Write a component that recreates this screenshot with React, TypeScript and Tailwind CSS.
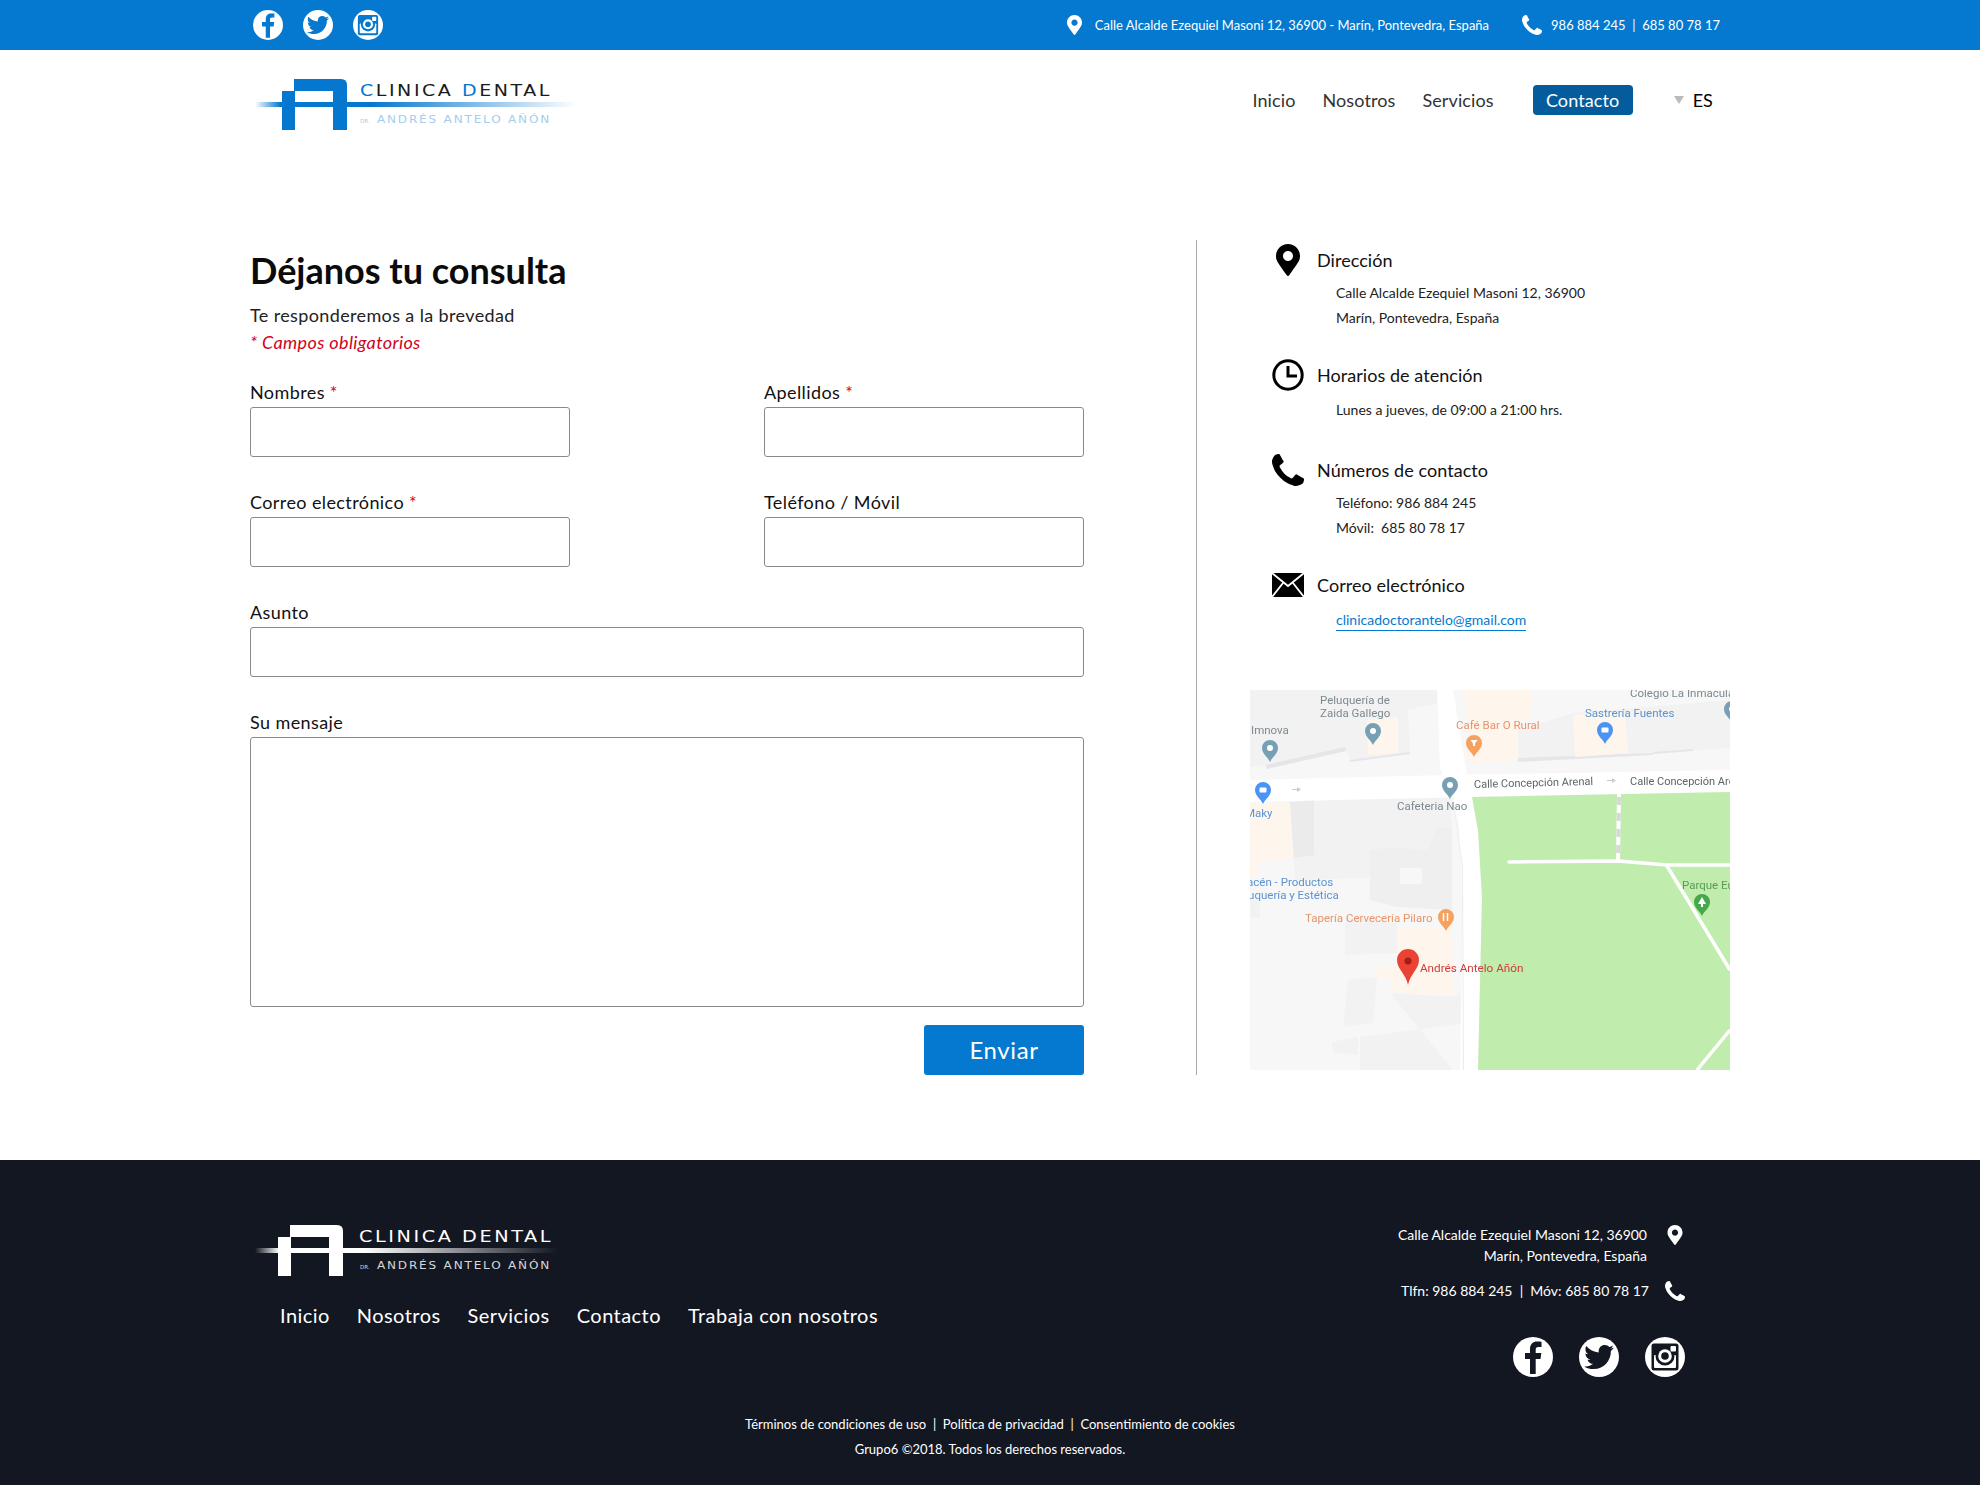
import React from "react";
import { FaMapMarkerAlt } from "react-icons/fa";

const PHONE_PATH =
  "M1408 1112q0 27-10 70.5t-21 68.5q-21 50-122 106-94 51-186 51-27 0-53-3.5t-57.5-12.5-47-14.5-55.5-20.5-49-18q-98-35-175-83-127-79-264-216t-216-264q-48-77-83-175-3-9-18-49t-20.5-55.5-14.5-47-12.5-57.5-3.5-53q0-92 51-186 56-101 106-122 25-11 68.5-21t70.5-10q14 0 21 3 18 6 53 76 11 19 30 54t35 63.5 31 53.5q3 4 17.5 25t21.5 35.5 7 28.5q0 20-28.5 50t-62 55-62 53-28.5 46q0 9 5 22.5t8.5 20.5 14 24 11.5 19q76 137 174 235t235 174q2 1 19 11.5t24 14 20.5 8.5 22.5 5q18 0 46-28.5t53-62 55-62 50-28.5q14 0 28.5 7t35.5 21.5 25 17.5q25 15 53.5 31t63.5 35 54 30q70 35 76 53 3 7 3 21z";

const TWITTER_PATH =
  "M459.37 151.716c.325 4.548.325 9.097.325 13.645 0 138.72-105.583 298.558-298.558 298.558-59.452 0-114.68-17.219-161.137-47.106 8.447.974 16.568 1.299 25.34 1.299 49.055 0 94.213-16.568 130.274-44.832-46.132-.975-84.792-31.188-98.112-72.772 6.498.974 12.995 1.624 19.818 1.624 9.421 0 18.843-1.3 27.614-3.573-48.081-9.747-84.143-51.98-84.143-102.985v-1.299c13.969 7.797 30.214 12.67 47.431 13.319-28.264-18.843-46.781-51.005-46.781-87.391 0-19.492 5.197-37.36 14.294-52.954 51.655 63.675 129.3 105.258 216.365 109.807-1.624-7.797-2.599-15.918-2.599-24.04 0-57.828 46.782-104.934 104.934-104.934 30.213 0 57.502 12.67 76.67 33.137 23.715-4.548 46.456-13.32 66.599-25.34-7.798 24.366-24.366 44.833-46.132 57.827 21.117-2.273 41.584-8.122 60.426-16.243-14.292 20.791-32.161 39.308-52.628 54.253z";

const PhoneIcon = ({ className }: { className: string }) => (
  <svg viewBox="0 0 1408 1408" className={className} fill="currentColor">
    <path d={PHONE_PATH} />
  </svg>
);

const Facebook = ({ cut, size }: { cut: string; size: string }) => (
  <svg viewBox="0 0 40 40" className={size}>
    <circle cx="20" cy="20" r="20" fill="#fff" />
    <path
      fill={cut}
      d="M17 37V22h-5v-6h5v-4c0-5 3-7.500 7-7.500 2 0 3.500.2 4.500.3v5.200h-3c-2.300 0-2.800 1.100-2.800 2.800V16h5.600l-.8 6h-4.800v15z"
    />
  </svg>
);

const Twitter = ({ cut, size }: { cut: string; size: string }) => (
  <svg viewBox="0 0 40 40" className={size}>
    <circle cx="20" cy="20" r="20" fill="#fff" />
    <g transform="translate(5.200 5.200) scale(0.058)">
      <path fill={cut} d={TWITTER_PATH} />
    </g>
  </svg>
);

const Instagram = ({ cut, size }: { cut: string; size: string }) => (
  <svg viewBox="0 0 40 40" className={size}>
    <circle cx="20" cy="20" r="20" fill="#fff" />
    <rect x="6.500" y="6.500" width="27" height="27" rx="2.500" fill={cut} />
    <rect x="9" y="18" width="22" height="13" rx="1" fill="#fff" />
    <circle cx="20" cy="19" r="9.500" fill={cut} />
    <circle cx="20" cy="19" r="6.800" fill="#fff" />
    <circle cx="20" cy="19" r="3.800" fill={cut} />
    <rect x="25.500" y="9" width="5.500" height="5.500" rx="1" fill="#fff" />
  </svg>
);

const Socials = ({ cut, size, className }: { cut: string; size: string; className: string }) => (
  <div className={className}>
    <Facebook cut={cut} size={size} />
    <Twitter cut={cut} size={size} />
    <Instagram cut={cut} size={size} />
  </div>
);

// logo drawing, the words stay real svg text
const Logo = ({ dark }: { dark?: boolean }) => {
  const main = dark ? "#ffffff" : "#0577cf";
  const ink = dark ? "#ffffff" : "#1b1b1b";
  const soft = dark ? "#d8d8d8" : "#a5cdee";
  const gradId = dark ? "lineDark" : "lineBlue";
  return (
    <svg viewBox="0 0 330 56" className="w-[330px] h-[56px]">
      <defs>
        <linearGradient id={gradId} x1="0" x2="1" y1="0" y2="0">
          <stop offset="0" stopColor={main} stopOpacity="0" />
          <stop offset="0.08" stopColor={main} />
          <stop offset="0.36" stopColor={main} />
          <stop offset="1" stopColor={main} stopOpacity="0" />
        </linearGradient>
      </defs>
      <rect x="0" y="24" width={dark ? 303 : 322} height="5" fill={`url(#${gradId})`} />
      <g transform={dark ? "translate(-4 0)" : undefined}>
        <path
          fill={main}
          fillRule="evenodd"
          d="M27 13h12V1h47q6 0 6 6v45H78V29H40v23H27zM40 13v11h38V13z"
        />
      </g>
      <text
        x={dark ? 104 : 105}
        y="18"
        textLength={dark ? 194 : 192}
        lengthAdjust="spacingAndGlyphs"
        fontSize="15"
        fontFamily="'DejaVu Sans', sans-serif"
        letterSpacing="2"
        fill={ink}
      >
        <tspan fill={dark ? ink : main}>C</tspan>LINICA <tspan fill={dark ? ink : main}>D</tspan>ENTAL
      </text>
      <text x="105" y="45" fontSize="5.500" fontFamily="'DejaVu Sans', sans-serif" fill={soft}>
        DR.
      </text>
      <text
        x="122"
        y="45"
        textLength="174"
        lengthAdjust="spacingAndGlyphs"
        fontSize="10"
        fontFamily="'DejaVu Sans', sans-serif"
        letterSpacing="1.500"
        fill={soft}
      >
        ANDRÉS ANTELO AÑÓN
      </text>
    </svg>
  );
};

const MapPin = ({ x, y, color, children }: { x: number; y: number; color: string; children?: React.ReactNode }) => (
  <g transform={`translate(${x} ${y})`}>
    <path d="M0 14C-2 9-8 6-8 0a8 8 0 0 1 16 0C8 6 2 9 0 14z" fill={color} />
    {children || <circle cx="0" cy="0" r="3" fill="#fff" />}
  </g>
);

const MapView = () => (
  <svg viewBox="0 0 480 380" className="w-[480px] h-[380px] block blur-[0.3px]">
    <rect width="480" height="380" fill="#f7f7f7" />
    {/* buildings */}
    <g fill="#f2f2f2">
      <path d="M0 0h187l3 13-32 7 2 42-60 8-5-13-80 18-15 2z" />
      <path d="M268 40l55-17 157-13v48l-77 5-135 7z" />
      <path d="M40 113l160-11 2 35-15 1-9 22-36-3-22 3v28l-75 2z" />
      <path d="M95 227l52 6v30l-52 2zM98 290l29-3-4 46-30 4zM82 352l26-5v18l-25-3z" />
      <path d="M140 303l63 4 14-10 1 36-108 14v33h93z" />
      <path d="M0 210h10v18H0z" />
    </g>
    <path fill="#efefef" d="M120 160l22-3 36 3 9-22 15-1v83l-55-3-27-7z" />
    <path fill="#ebebeb" d="M40 112l24-2v55l-20 3z" />
    <path fill="#e6e6ea" d="M15 75l80-18 1 4-79 18zM100 70l60-8v2l-60 8zM268 68l135-5v2l-135 7zM403 62l40-3v2l-40 3z" />
    <rect x="150" y="178" width="22" height="16" fill="#f7f7f7" />
    {/* beige plots */}
    <g fill="#fef5ec">
      <path d="M212 0h69v23l-13 17v30l-45 3-6-8V23z" />
      <path d="M323 25l52-3 3 41-53 4z" />
      <path d="M117 30l31-3v36l-30 2z" />
      <path d="M0 113h40l3 55-36 4v15H0z" />
      <path d="M148 237h54l1 68-63-3 2-14-17-1 2-10h21z" />
    </g>
    {/* roads */}
    <path fill="#fff" d="M187 0h16l14 85 5 22 6 33 4 67-4 173h-18l3-175-4-70-7-27-12-30z" />
    <path fill="#fff" d="M0 90l197-5 283-5v22l-258 5L0 112z" />
    <path fill="#ececec" d="M202 107h1l10 70 1 203h-1l-1-203-9-65z" />
    {/* park */}
    <path fill="#c0ecae" d="M222 107l258-5v278H228l4-173-4-67z" />
    <g fill="none" stroke="#fff">
      <path strokeWidth="3.500" strokeLinecap="round" d="M259 172l109-1 49 4h63" />
      <path strokeWidth="3.500" d="M417 176l63 104M447 380l33-40" />
      <path strokeWidth="4" d="M369 103l-1 68" />
      <path strokeWidth="4" stroke="#d8d8d8" strokeDasharray="8 8" d="M369 107l-1 62" />
    </g>
    {/* labels */}
    <g fontFamily="Roboto, sans-serif" fontSize="11.500">
      <g fill="#7c8a90">
        <text x="70" y="14">Peluquería de</text>
        <text x="70" y="27">Zaida Gallego</text>
        <text x="1" y="44">Imnova</text>
        <text x="147" y="120">Cafeteria Nao</text>
        <text x="380" y="7">Colegio La Inmaculada</text>
      </g>
      <g fill="#5b6468" fontSize="11">
        <text x="224" y="98" transform="rotate(-1.500 224 98)">Calle Concepción Arenal</text>
        <text x="380" y="95">Calle Concepción Arenal</text>
      </g>
      <g fill="#5b93cf">
        <text x="335" y="27">Sastrería Fuentes</text>
        <text x="-5" y="127">Maky</text>
        <text x="-13" y="196">Macén - Productos</text>
        <text x="-18" y="209">Peluquería y Estética</text>
      </g>
      <text x="206" y="39" fill="#e8946a">Café Bar O Rural</text>
      <text x="55" y="232" fill="#e8946a">Tapería Cervecería Pilaro</text>
      <text x="170" y="282" fontSize="11.700" fill="#d23b36">Andrés Antelo Añón</text>
      <text x="432" y="199" fill="#5a9a58">Parque Eugenio</text>
    </g>
    {/* pins */}
    <MapPin x={123} y={41} color="#78a0b4" />
    <MapPin x={20} y={58} color="#78a0b4" />
    <MapPin x={200} y={95} color="#78a0b4" />
    <MapPin x={482} y={19} color="#78a0b4" />
    <MapPin x={224} y={53} color="#f5a25f">
      <path d="M-3.500-3h7L1 0.500V3H-1V0.500z" fill="#fff" />
    </MapPin>
    <MapPin x={355} y={40} color="#4c94f3">
      <rect x="-3.500" y="-2.500" width="7" height="5" rx="1" fill="#fff" />
    </MapPin>
    <MapPin x={13} y={100} color="#4c94f3">
      <rect x="-3.500" y="-2.500" width="7" height="5" rx="1" fill="#fff" />
    </MapPin>
    <MapPin x={196} y={227} color="#f5a25f">
      <path d="M-2.500-4v8M1.500-4v8" stroke="#fff" strokeWidth="1.500" />
    </MapPin>
    <MapPin x={452} y={212} color="#46a84a">
      <path d="M0-5l4 7h-3v3h-2V2h-3z" fill="#fff" />
    </MapPin>
    <g fill="#c5cdd2">
      <path d="M42 99h8v1h-8zM47 97l4 2.500-4 2.500zM357 90h7v1h-7zM362 88l4 2.500-4 2.500z" />
    </g>
    {/* red marker */}
    <g transform="translate(158 260)">
      <path d="M0 35C-2 24-11 19-11 10a11 11 0 0 1 22 0C11 19 2 24 0 35z" fill="#ea4335" />
      <circle cx="0" cy="11" r="3.500" fill="#a61c14" />
    </g>
  </svg>
);

const Field = ({ label, required, className }: { label: string; required?: boolean; className: string }) => (
  <label className="block">
    <span className="block text-[18px] leading-[22px] tracking-[0.4px] text-[#111] mb-[4px]">
      {label}
      {required && <span className="text-[#d0021b] ml-[5px]">*</span>}
    </span>
    <input type="text" className={className} />
  </label>
);

const boxClass = "block w-full bg-white border border-[#8a8a8a] rounded-[3px] outline-none";

const InfoBlock = ({
  icon,
  title,
  children,
  className,
  bodyClass,
}: {
  icon: React.ReactNode;
  title: string;
  children: React.ReactNode;
  className: string;
  bodyClass: string;
}) => (
  <div className={className}>
    <div className="flex items-center h-[32px]">
      <div className="w-[32px] flex justify-center text-black mr-[13px]">{icon}</div>
      <h3 className="text-[18px] tracking-[0.05px] text-[#111]">{title}</h3>
    </div>
    <div className={`pl-[64px] text-[14px] leading-[25px] text-[#222] ${bodyClass}`}>{children}</div>
  </div>
);

export default function App() {
  return (
    <div className="w-[1980px] bg-white font-['Lato','Noto_Sans',sans-serif]">
      {/* top bar */}
      <div className="h-[50px] bg-[#0479cf] text-white flex items-center justify-between pl-[253px] pr-[260px]">
        <Socials cut="#0479cf" size="w-[30px] h-[30px]" className="flex gap-[20px]" />
        <div className="flex items-center text-[13px]">
          <FaMapMarkerAlt className="w-[17px] h-[20px] mr-[12px]" />
          <span className="pt-px">Calle Alcalde Ezequiel Masoni 12, 36900 - Marín, Pontevedra, España</span>
          <PhoneIcon className="w-[20px] h-[20px] ml-[33px] mr-[9px]" />
          <span className="pt-px">986 884 245&nbsp; |&nbsp; 685 80 78 17</span>
        </div>
      </div>

      {/* header */}
      <header className="h-[100px] flex items-center justify-between pl-[255px] pr-[267px]">
        <div className="mt-[12px]">
          <Logo />
        </div>
        <nav className="flex items-center text-[18px] tracking-[0.1px] text-[#333]">
          <a className="mr-[27px]">Inicio</a>
          <a className="mr-[27px]">Nosotros</a>
          <a className="mr-[39px]">Servicios</a>
          <a className="w-[100px] h-[30px] flex items-center justify-center rounded-[4px] bg-[#045c9c] text-white">
            Contacto
          </a>
          <span className="ml-[41px] mr-[9px] w-0 h-0 border-x-[5px] border-x-transparent border-t-[8px] border-t-[#bbbbbb]" />
          <span className="text-black">ES</span>
        </nav>
      </header>

      {/* contact */}
      <main className="flex pl-[250px] pr-[250px] pt-[90px] pb-[85px]">
        <section className="w-[947px] shrink-0 border-r border-[#aaaaaa] pr-[112px]">
          <h1 className="mt-[8px] text-[36px] leading-[44px] font-bold text-[#0b0b0b]">Déjanos tu consulta</h1>
          <p className="mt-[12px] text-[18px] leading-[22px] text-[#222] tracking-[0.37px]">Te responderemos a la brevedad</p>
          <p className="mt-[5px] text-[18px] leading-[22px] italic tracking-[0.36px] text-[#d0021b]">* Campos obligatorios</p>

          <form className="mt-[28px]">
            <div className="grid grid-cols-[320px_320px] gap-x-[194px] gap-y-[34px]">
              <Field label="Nombres" required className={`${boxClass} h-[50px]`} />
              <Field label="Apellidos" required className={`${boxClass} h-[50px]`} />
              <Field label="Correo electrónico" required className={`${boxClass} h-[50px]`} />
              <Field label="Teléfono / Móvil" className={`${boxClass} h-[50px]`} />
            </div>
            <div className="mt-[34px]">
              <Field label="Asunto" className={`${boxClass} h-[50px]`} />
            </div>
            <label className="block mt-[34px]">
              <span className="block text-[18px] leading-[22px] tracking-[0.4px] text-[#111] mb-[4px]">Su mensaje</span>
              <textarea className={`${boxClass} h-[270px] resize-none`} />
            </label>
            <div className="flex justify-end mt-[18px]">
              <button
                type="button"
                className="w-[160px] h-[50px] bg-[#0479cf] text-white text-[24px] tracking-[0.6px] rounded-[3px]"
              >
                Enviar
              </button>
            </div>
          </form>
        </section>

        <aside className="flex-1 pl-[53px] pt-[4px]">
          <InfoBlock
            title="Dirección"
            className="ml-[22px]"
            bodyClass="mt-[4px]"
            icon={<FaMapMarkerAlt className="w-[24px] h-[32px]" />}
          >
            <p>Calle Alcalde Ezequiel Masoni 12, 36900</p>
            <p>Marín, Pontevedra, España</p>
          </InfoBlock>
          <InfoBlock
            title="Horarios de atención"
            className="ml-[22px] mt-[29px]"
            bodyClass="mt-[6px]"
            icon={
              <svg viewBox="0 0 32 32" className="w-[32px] h-[32px]" fill="none" stroke="currentColor">
                <circle cx="16" cy="16" r="14.200" strokeWidth="3" />
                <path d="M16 7v10h9" strokeWidth="3" />
              </svg>
            }
          >
            <p>Lunes a jueves, de 09:00 a 21:00 hrs.</p>
          </InfoBlock>
          <InfoBlock
            title="Números de contacto"
            className="ml-[22px] mt-[32px]"
            bodyClass="mt-[4px]"
            icon={<PhoneIcon className="w-[32px] h-[32px]" />}
          >
            <p>Teléfono: 986 884 245</p>
            <p>Móvil:&nbsp; 685 80 78 17</p>
          </InfoBlock>
          <InfoBlock
            title="Correo electrónico"
            className="ml-[22px] mt-[29px]"
            bodyClass="mt-[6px]"
            icon={
              <svg viewBox="0 0 32 24" className="w-[32px] h-[24px]">
                <rect width="32" height="24" fill="currentColor" />
                <path d="M0 0l16 13L32 0M0 24l11-14M32 24L21 10" fill="none" stroke="#fff" strokeWidth="1.800" />
              </svg>
            }
          >
            <a className="inline-block text-[#0479cf] border-b border-[#0479cf] leading-[20px]">
              clinicadoctorantelo@gmail.com
            </a>
          </InfoBlock>
          <div className="mt-[58px]">
            <MapView />
          </div>
        </aside>
      </main>

      {/* footer */}
      <footer className="h-[325px] bg-[#131722] text-white pl-[250px] pr-[295px] pt-[64px]">
        <div className="flex justify-between">
          <div>
            <div className="ml-[5px]">
              <Logo dark />
            </div>
            <nav className="flex gap-[27px] ml-[30px] mt-[21px] text-[20px] leading-[28px] tracking-[0.45px]">
              <a>Inicio</a>
              <a>Nosotros</a>
              <a>Servicios</a>
              <a>Contacto</a>
              <a>Trabaja con nosotros</a>
            </nav>
          </div>
          <div className="flex flex-col items-end text-[14px]">
            <div className="flex">
              <p className="text-right leading-[21px]">
                Calle Alcalde Ezequiel Masoni 12, 36900
                <br />
                Marín, Pontevedra, España
              </p>
              <FaMapMarkerAlt className="w-[16px] h-[20px] ml-[20px] mr-[2px] mt-[1px]" />
            </div>
            <div className="flex items-center mt-[14px]">
              <span>Tlfn: 986 884 245&nbsp; |&nbsp; Móv: 685 80 78 17</span>
              <PhoneIcon className="w-[20px] h-[20px] ml-[16px]" />
            </div>
            <Socials cut="#131722" size="w-[40px] h-[40px]" className="flex gap-[26px] mt-[36px]" />
          </div>
        </div>
        <div className="mt-[35px] ml-[45px] text-center text-[13px] leading-[25px]">
          <p>Términos de condiciones de uso&nbsp; |&nbsp; Política de privacidad&nbsp; |&nbsp; Consentimiento de cookies</p>
          <p>Grupo6 ©2018. Todos los derechos reservados.</p>
        </div>
      </footer>
    </div>
  );
}
